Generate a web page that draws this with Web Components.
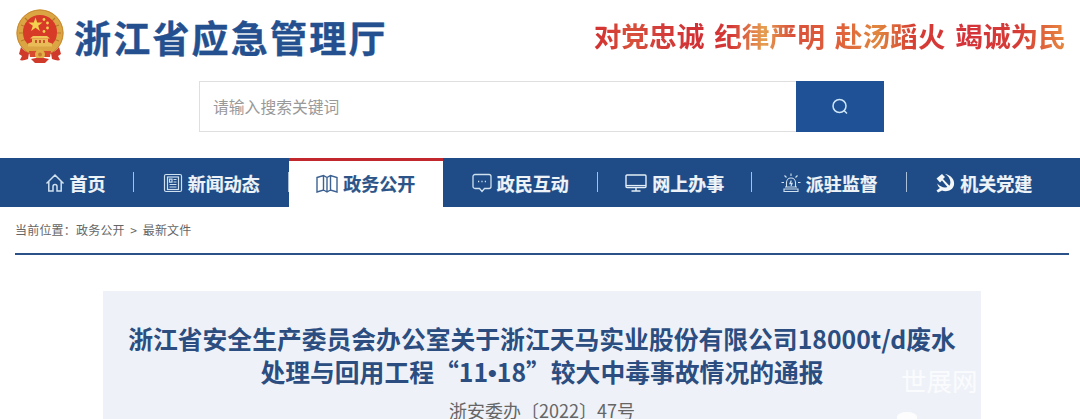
<!DOCTYPE html>
<html lang="zh">
<head>
<meta charset="utf-8">
<title>浙江省应急管理厅</title>
<style>
  html, body { margin: 0; padding: 0; background: #fff; overflow: hidden; }
  body { width: 1080px; height: 419px; font-family: "Noto Sans CJK SC", "Liberation Sans", sans-serif; }
  .dot { font-family: "Liberation Sans", sans-serif; }
</style>
</head>
<body>
<site-header></site-header>
<site-search placeholder="请输入搜索关键词"></site-search>
<site-nav>
  <nav-item icon="home" first>首页</nav-item>
  <nav-item icon="news">新闻动态</nav-item>
  <nav-item icon="book" active>政务公开</nav-item>
  <nav-item icon="chat">政民互动</nav-item>
  <nav-item icon="screen">网上办事</nav-item>
  <nav-item icon="alarm">派驻监督</nav-item>
  <nav-item icon="party" last>机关党建</nav-item>
</site-nav>
<bread-crumb></bread-crumb>
<doc-card>
  <span slot="title">浙江省安全生产委员会办公室关于浙江天马实业股份有限公司18000t/d废水<br>处理与回用工程“11<span class="dot">•</span>18”较大中毒事故情况的通报</span>
  <span slot="sub">浙安委办〔2022〕47号</span>
</doc-card>

<script>
const font = `"Noto Sans CJK SC", "Liberation Sans", sans-serif`;

const emblem = `
<svg width="48" height="54" viewBox="0 0 48 54">
  <circle cx="24" cy="24" r="23.500" fill="#dba544"/>
  <circle cx="24" cy="24" r="23" fill="none" stroke="#c98a2f" stroke-width="1"/>
  <path d="M9 9l3 3M5 16l4 1.500M3 24h4M5 32l4-1.500M39 9l-3 3M43 16l-4 1.500M45 24h-4M43 32l-4-1.500" stroke="#b9792a" stroke-width="1.200"/>
  <path d="M24 6a17 17 0 0 1 17 17c0 7-3 11-6 13H13c-3-2-6-6-6-13A17 17 0 0 1 24 6z" fill="#d83a28"/>
  <path d="M19.500 8.500l1.700 5.100h5.400l-4.400 3.200 1.700 5.100-4.400-3.200-4.400 3.200 1.700-5.100-4.400-3.200h5.400z" fill="#f4d04f"/>
  <circle cx="28" cy="10.500" r="1.400" fill="#f4d04f"/>
  <circle cx="31.500" cy="14" r="1.400" fill="#f4d04f"/>
  <circle cx="31.500" cy="19" r="1.400" fill="#f4d04f"/>
  <circle cx="28" cy="22.500" r="1.400" fill="#f4d04f"/>
  <path d="M17 27h14l3 2.500H14z" fill="#f0c65c"/>
  <path d="M16 29.500h16V33l4 1.500v3H12v-3l4-1.500z" fill="#e9bc58"/>
  <path d="M19 31h2v3h-2zM23 31h2v3h-2zM27 31h2v3h-2z" fill="#c7562c"/>
  <path d="M5 38c2 3 5 5 8 6l-1 6c-3 1-6 2-8 1l2-4-3-2z" fill="#cf3a2a"/>
  <path d="M43 38c-2 3-5 5-8 6l1 6c3 1 6 2 8 1l-2-4 3-2z" fill="#cf3a2a"/>
  <path d="M13 42h22l-1 6H14z" fill="#d84a2e"/>
  <circle cx="24" cy="45.500" r="5" fill="#e2ae47"/>
  <circle cx="24" cy="45.500" r="2" fill="#c77b30"/>
  <path d="M15 50l4 4h10l4-4-5-1h-8z" fill="#cf3a2a"/>
</svg>`;

class SiteHeader extends HTMLElement {
  constructor() {
    super();
    this.attachShadow({ mode: "open" });
    this.shadowRoot.innerHTML = `
    <style>
      :host { display: flex; align-items: center; height: 70px; padding: 0 14px 0 16px; box-sizing: border-box; font-family: ${font}; }
      .logo { display: flex; flex: none; margin: 1px 10px 0 0; }
      h1 { margin: 4px 0 0; font-size: 37px; line-height: 1; font-weight: 700; letter-spacing: 2.200px; color: #24508f; -webkit-text-stroke: .4px #24508f; }
      .slogan { margin-left: auto; font-size: 27.700px; line-height: 1.1; font-weight: 700; margin-top: 1px; word-spacing: 3.500px;
        background: linear-gradient(90deg, #d22f30 0%, #d8503a 8%, #d4403a 13%, #d13034 22%, #d43836 29%, #e6a050 36%, #d9503a 42%, #e0603a 52%, #e0873f 60%, #d63c33 68%, #d4333a 78%, #d63c36 90%, #e88a40 100%);
        -webkit-background-clip: text; background-clip: text; color: transparent; white-space: pre; }
    </style>
    <div class="logo">${emblem}</div>
    <h1>浙江省应急管理厅</h1>
    <div class="slogan">对党忠诚 纪律严明 赴汤蹈火 竭诚为民</div>`;
  }
}
customElements.define("site-header", SiteHeader);

class SiteSearch extends HTMLElement {
  constructor() {
    super();
    this.attachShadow({ mode: "open" });
    this.shadowRoot.innerHTML = `
    <style>
      :host { display: flex; width: 685px; height: 51px; margin: 11px 0 26px 199px; font-family: ${font}; box-sizing: border-box; }
      .box { flex: 1; border: 1px solid #dfdfdf; border-right: 0; display: flex; align-items: center; padding-left: 13px; font-size: 15.800px; color: #999; }
      .btn { width: 88px; background: #1f5197; display: flex; align-items: center; justify-content: center; }
    </style>
    <div class="box">${this.getAttribute("placeholder")}</div>
    <div class="btn"><svg width="18" height="18" viewBox="0 0 18 18" fill="none" stroke="#cfe6f7" stroke-width="1.500"><circle cx="8.500" cy="8" r="6.500"/><path d="M13 12.500l3 3"/></svg></div>`;
  }
}
customElements.define("site-search", SiteSearch);

class SiteNav extends HTMLElement {
  constructor() {
    super();
    this.attachShadow({ mode: "open" });
    this.shadowRoot.innerHTML = `
    <style>
      :host { display: flex; height: 49px; background: #1f4c87; font-family: ${font}; }
    </style>
    <slot></slot>`;
  }
}
customElements.define("site-nav", SiteNav);

const navIcons = {
  home: `<svg width="20" height="20" viewBox="0 0 20 20" fill="none" stroke="#cfe0ee" stroke-width="1.500"><path d="M1.500 10.500 10 2l8.500 8.500M3.800 8.500V18H8v-4.500a2 2 0 0 1 4 0V18h4.200V8.500"/></svg>`,
  news: `<svg width="20" height="20" viewBox="0 0 20 20" fill="none" stroke="#cfe0ee" stroke-width="1.200"><rect x="1.500" y="1.500" width="17" height="17" rx="1.500"/><rect x="4.500" y="4" width="11" height="12.500"/><path d="M10.500 6.500h3M10.500 9h3M6.500 11.500h7M6.500 14h7M6.500 6.200h2.500v3H6.500z"/></svg>`,
  book: `<svg width="22" height="20" viewBox="0 0 22 20" fill="none" stroke="#3d6291" stroke-width="1.400"><path d="M1 3.500 7.500 1.500 11 3.500l3.500-2 6.500 2V18l-6.500-2L11 18l-3.500-2L1 18zM7.500 1.500V16M14.500 1.500V16M11 3.500V18"/></svg>`,
  chat: `<svg width="20" height="20" viewBox="0 0 20 20" fill="none" stroke="#cfe0ee" stroke-width="1.300"><path d="M3 1.500h14a2 2 0 0 1 2 2v10a2 2 0 0 1-2 2h-4.500L10 18.500l-2.500-3H3a2 2 0 0 1-2-2v-10a2 2 0 0 1 2-2z"/><path d="M6 8.500h1.200M9.400 8.500h1.200M12.800 8.500h1.200" stroke-width="1.500"/></svg>`,
  screen: `<svg width="22" height="20" viewBox="0 0 22 20" fill="none" stroke="#e4eef6" stroke-width="1.400"><rect x="1" y="2" width="20" height="12.500" rx="1"/><path d="M1 12.500h20" stroke-width="1.200"/><path d="M11 14.500V18M6.500 18h9"/></svg>`,
  alarm: `<svg width="20" height="20" viewBox="0 0 20 20" fill="none" stroke="#cfe0ee" stroke-width="1.100"><path d="M5.500 14V9.500a4.500 4.500 0 0 1 9 0V14M4 14h12M3 18.500h14V16H3z"/><path d="M10.300 7.500 9 10.500h2l-1 2.500" stroke-width="1.300"/><path d="M10 .5V3M3.500 2.500 5.500 4.500M16.500 2.500 14.500 4.500M.5 9.500H3M17 9.500h2.500"/></svg>`,
  party: `<svg width="20" height="20" viewBox="0 0 20 20" fill="#f4f7fa"><path d="M10 1C16 2 20 7 19 12 18 17 12 19.500 7 17.500L3 19.500 1.500 17.500 5 15C3 13.500 2.500 12 2.500 10.500 5 14 10 15.500 13.500 13.500 16.500 11.500 16.500 5 10 1z"/><path d="M1.500 5.500 7 1l3 3-2 2 8.500 9-1.800 1.800L7 7.500l-2 2z"/></svg>`
};

class NavItem extends HTMLElement {
  constructor() {
    super();
    this.attachShadow({ mode: "open" });
    const active = this.hasAttribute("active");
    const first = this.hasAttribute("first");
    const ink = active ? "#2c5488" : "#eef3f8";
    this.shadowRoot.innerHTML = `
    <style>
      :host { display: flex; align-items: center; justify-content: center; gap: 5px; box-sizing: border-box; position: relative;
        width: ${first ? 134 : 154.5}px; padding-left: ${first ? 16 : 0}px; height: 49px;
        font-size: 18px; font-weight: 700; color: ${ink}; -webkit-text-stroke: .2px ${ink};
        background: ${active ? "#fff" : "transparent"}; ${active ? "border-top: 3px solid #c1272d;" : ""} }
      :host(:not([active]):not([last]))::after { content: ""; position: absolute; right: 0; top: 14px; height: 20px; width: 1px; background: #a9c0d8; }
      svg { display: block; flex: none; }
      .ic { display: flex; }
      .tx { line-height: 1; margin-top: ${active ? -2 : 1}px; }
    </style>
    <span class="ic">${navIcons[this.getAttribute("icon")]}</span><span class="tx"><slot></slot></span>`;
  }
}
customElements.define("nav-item", NavItem);

class BreadCrumb extends HTMLElement {
  constructor() {
    super();
    this.attachShadow({ mode: "open" });
    this.shadowRoot.innerHTML = `
    <style>
      :host { display: block; margin: 0 11px 0 15px; height: 48px; box-sizing: border-box; border-bottom: 2px solid #2b5288; font-family: ${font}; }
      div { display: flex; gap: 5.500px; font-size: 12px; letter-spacing: .2px; line-height: 1; color: #666; padding-top: 17px; }
    </style>
    <div><span>当前位置：政务公开</span><span>&gt;</span><span>最新文件</span></div>`;
  }
}
customElements.define("bread-crumb", BreadCrumb);

class DocCard extends HTMLElement {
  constructor() {
    super();
    this.attachShadow({ mode: "open" });
    this.shadowRoot.innerHTML = `
    <style>
      :host { display: block; position: relative; width: 878px; height: 128px; margin: 36px 0 0 103px; background: #eef2f8; font-family: ${font}; text-align: center; overflow: hidden; }
      .t { padding-top: 31px; font-size: 24.800px; line-height: 33px; font-weight: 700; color: #2c4d80; }
      .s { margin-top: 11px; font-size: 18px; line-height: 18px; color: #666; }
      .wm { position: absolute; left: 798px; top: 76px; font-size: 25.500px; line-height: 1; color: rgba(255,255,255,.75); white-space: nowrap; }
      .blob { position: absolute; left: 794px; top: 121px; width: 20px; height: 10px; border-radius: 50% 50% 0 0; background: rgba(255,255,255,.85); }
    </style>
    <div class="t"><slot name="title"></slot></div>
    <div class="s"><slot name="sub"></slot></div>
    <div class="wm">世展网</div>
    <div class="blob"></div>`;
  }
}
customElements.define("doc-card", DocCard);
</script>
</body>
</html>
